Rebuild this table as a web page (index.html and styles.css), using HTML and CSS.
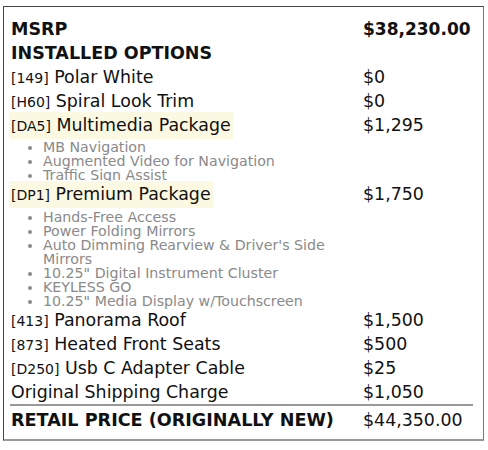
FILE: index.html
```html
<!DOCTYPE html>
<html>
<head>
<meta charset="utf-8">
<link rel="stylesheet" href="styles.css">
</head>
<body>
<div class="sticker">
  <div class="row bold"><div class="label">MSRP</div><div class="price">$38,230.00</div></div>
  <div class="row bold"><div class="label">INSTALLED OPTIONS</div><div class="price"></div></div>
  <div class="row"><div class="label"><span class="code">[149]</span> Polar White</div><div class="price">$0</div></div>
  <div class="row"><div class="label"><span class="code">[H60]</span> Spiral Look Trim</div><div class="price">$0</div></div>
  <div class="row"><div class="label"><span class="hl"><span class="code">[DA5]</span> Multimedia Package</span></div><div class="price">$1,295</div></div>
  <div class="row sub"><ul class="items">
    <li>MB Navigation</li>
    <li>Augmented Video for Navigation</li>
    <li>Traffic Sign Assist</li>
  </ul></div>
  <div class="row"><div class="label"><span class="hl"><span class="code">[DP1]</span> Premium Package</span></div><div class="price">$1,750</div></div>
  <div class="row sub"><ul class="items items-wide">
    <li>Hands-Free Access</li>
    <li>Power Folding Mirrors</li>
    <li>Auto Dimming Rearview &amp; Driver's Side Mirrors</li>
    <li>10.25" Digital Instrument Cluster</li>
    <li>KEYLESS GO</li>
    <li>10.25" Media Display w/Touchscreen</li>
  </ul></div>
  <div class="row"><div class="label"><span class="code">[413]</span> Panorama Roof</div><div class="price">$1,500</div></div>
  <div class="row"><div class="label"><span class="code">[873]</span> Heated Front Seats</div><div class="price">$500</div></div>
  <div class="row"><div class="label"><span class="code">[D250]</span> Usb C Adapter Cable</div><div class="price">$25</div></div>
  <div class="row"><div class="label">Original Shipping Charge</div><div class="price">$1,050</div></div>
  <div class="row total"><div class="label">RETAIL PRICE (ORIGINALLY NEW)</div><div class="price">$44,350.00</div></div>
</div>
</body>
</html>
```
FILE: styles.css
```css
html, body {
  margin: 0;
  padding: 0;
  background: #fff;
}
body {
  font-family: "DejaVu Sans", "Liberation Sans", sans-serif;
  color: #111;
}
.sticker {
  margin: 6px 0 0 3px;
  width: 481px;
  box-sizing: border-box;
  border: 1px solid #444;
  border-right-color: #777;
  border-bottom: 2px solid #999;
  padding: 10px 10px 7px 6px;
}
.row {
  display: grid;
  grid-template-columns: 353px 1fr;
  font-size: 17.4px;
  line-height: 24px;
  height: 24px;
  white-space: nowrap;
}
.label {
  padding-left: 1px;
}
.row.bold {
  font-weight: bold;
  font-size: 17.5px;
}
.row.bold .price {
  font-size: 17px;
}
.code {
  font-size: 14px;
  line-height: 1;
}
.hl {
  background: #fcf9e3;
  padding: 3px 2px 4px;
  margin-left: -2px;
}
.row.sub {
  display: block;
  height: auto;
  white-space: normal;
}
.items {
  margin: 3px 0 0;
  padding: 0 0 0 33px;
  width: 320px;
  list-style: disc;
  color: #8a8a8a;
  font-size: 14.2px;
  line-height: 14px;
}
.items-wide {
  margin-top: 4px;
}
.total {
  border-top: 2px solid #999;
  padding-top: 2px;
}
.total .label {
  font-weight: bold;
  font-size: 17.6px;
}
```
